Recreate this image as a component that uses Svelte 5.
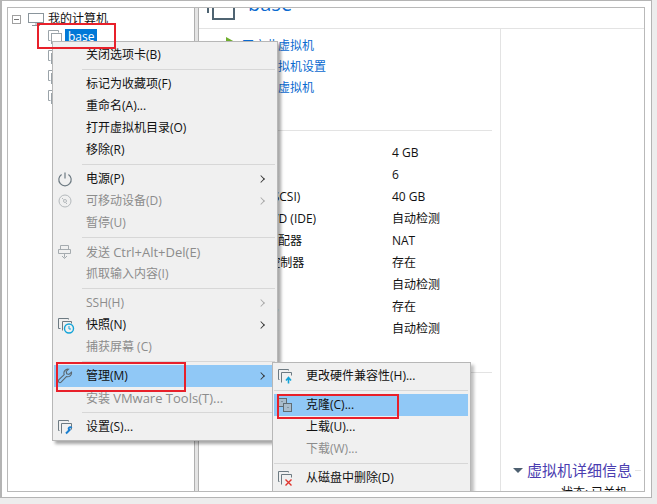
<script>
  const hw = [
    ['内存', '4 GB'], ['处理器', '6'], ['硬盘 (SCSI)', '40 GB'], ['CD/DVD (IDE)', '自动检测'],
    ['网络适配器', 'NAT'], ['USB 控制器', '存在'], ['声卡', '自动检测'], ['打印机', '存在'], ['显示器', '自动检测']
  ];
</script>

<svelte:head><title>VMware</title></svelte:head>

{#snippet vm()}
  <svg width="14" height="14" viewBox="0 0 14 14" fill="none" stroke="#9aa3a9">
    <path d="M2.5 10.5h-2v-10h10v2" />
    <rect x="3.5" y="3.5" width="10" height="10" fill="#fff" />
  </svg>
{/snippet}

<div class="page">
  <div class="frame">
    <div class="window">
      <aside class="tree">
        <div class="root">
          <span class="minus"></span>
          <svg width="16" height="13" viewBox="0 0 16 13" fill="none" stroke="#8a959c"><rect x=".5" y=".5" width="15" height="9" /><path d="M8 9.5v3M4 12.5h8" /></svg>
          <span>我的计算机</span>
        </div>
        <div class="vm">{@render vm()}<span class="sel">base</span></div>
        <div class="vm">{@render vm()}</div>
        <div class="vm">{@render vm()}</div>
        <div class="vm">{@render vm()}</div>
      </aside>
      <div class="split"></div>
      <main class="content">
        <header class="head">
          <svg width="28" height="28" viewBox="0 0 28 28" fill="none" stroke="#4f6472" stroke-width="2"><path d="M1 20v-19h17" /><rect x="6" y="5" width="21" height="21" /></svg>
          <span class="title">base</span>
        </header>
        <div class="body">
          <section class="left">
            <div class="links">
              <div class="link"><span class="play"></span>开启此虚拟机</div>
              <div class="link">编辑虚拟机设置</div>
              <div class="link">升级此虚拟机</div>
            </div>
            <div class="rule"></div>
            <div class="table">
              {#each hw as [k, v]}
                <div class="k">{k}</div><div class="v">{v}</div>
              {/each}
            </div>
            <div class="rule low"></div>
          </section>
          <section class="right">
            <div class="details"><span class="tri"></span><span class="dtitle">虚拟机详细信息</span><span class="dline"></span></div>
            <div class="state">状态: 已关机</div>
          </section>
        </div>
      </main>

      <div class="menu main-menu">
        <div class="item">关闭选项卡(B)</div>
        <div class="sep"></div>
        <div class="item">标记为收藏项(F)</div>
        <div class="item">重命名(A)...</div>
        <div class="item">打开虚拟机目录(O)</div>
        <div class="item">移除(R)</div>
        <div class="sep"></div>
        <div class="item has">
          <svg class="ic" width="16" height="16" viewBox="0 0 16 16" fill="none" stroke="#6d7a82" stroke-width="1.2"><path d="M4.6 3.4a6.2 6.2 0 1 0 6.8 0M8 1.5v6" /></svg>
          电源(P)<i class="arrow"></i>
        </div>
        <div class="item off has">
          <svg class="ic" width="16" height="16" viewBox="0 0 16 16" fill="none" stroke="#b4b9bc"><circle cx="8" cy="8" r="6" /><circle cx="8" cy="8" r="1.5" /><path d="M5 5l1.5 1.5M10 11l-1-1" /></svg>
          可移动设备(D)<i class="arrow"></i>
        </div>
        <div class="item off">暂停(U)</div>
        <div class="sep"></div>
        <div class="item off">
          <svg class="ic" width="16" height="16" viewBox="0 0 16 16" fill="none" stroke="#a5abaf"><path d="M3.5 1.5h8v4h-8zM1.5 5.5h12v4h-12zM7.5 9.5v4M5 12l2.5 2.5L10 12" /></svg>
          发送 <span class="lat">Ctrl+Alt+Del(E)</span>
        </div>
        <div class="item off">抓取输入内容(I)</div>
        <div class="sep"></div>
        <div class="item off has">SSH(H)<i class="arrow"></i></div>
        <div class="item has">
          <svg class="ic big" width="18" height="18" viewBox="0 0 18 18" fill="none" stroke="#6d7a82"><path d="M3.5 12.5h-2v-10h10v1" /><path d="M5.5 14.5v-9h9v2" /><circle cx="12" cy="12.5" r="4.5" stroke="#14a4d8" stroke-width="1.4" fill="#f0f0f0" /><path d="M12 10v3h2" stroke="#14a4d8" /></svg>
          快照(N)<i class="arrow"></i>
        </div>
        <div class="item off">捕获屏幕 (C)</div>
        <div class="sep"></div>
        <div class="item has hot">
          <svg class="ic" width="16" height="16" viewBox="0 0 16 16" fill="none" stroke="#5a666e" stroke-width="1.1"><path d="M14.5 4.2l-2.6 2.2-2.2-.7-.5-2.3 2.4-2.2a4 4 0 0 0-4.4 5.4L1.7 11.8a1.7 1.7 0 0 0 2.4 2.4l5.3-5.6a4 4 0 0 0 5.1-4.4z" /></svg>
          管理(M)<i class="arrow"></i>
        </div>
        <div class="item off">安装 <span class="lat">VMware Tools(T)...</span></div>
        <div class="sep"></div>
        <div class="item">
          <svg class="ic" width="16" height="16" viewBox="0 0 16 16" fill="none" stroke="#6d7a82"><path d="M2.5 11.5h-1v-10h10v1" /><path d="M4.5 14.5v-10h10v6" /><path d="M9 14.5l3.5-3.5a1.5 1.5 0 1 1 2-2" stroke="#1a7fd0" stroke-width="2" /></svg>
          设置(S)...
        </div>
      </div>

      <div class="menu sub-menu">
        <div class="item">
          <svg class="ic" width="16" height="16" viewBox="0 0 16 16" fill="none" stroke="#6d7a82"><path d="M2.5 11.5h-1v-10h10v1" /><path d="M4.5 14.5v-10h10v3" /><path d="M11.5 15.5v-5M9 12.5l2.5-3 2.5 3" stroke="#14a4d8" stroke-width="1.6" /></svg>
          更改硬件兼容性(H)...
        </div>
        <div class="sep"></div>
        <div class="item hot">
          <svg class="ic" width="16" height="16" viewBox="0 0 16 16" fill="none" stroke="#5f6c74"><rect x="1.5" y="1.5" width="8" height="8" fill="#a9bccb" /><rect x="6.5" y="6.5" width="8" height="8" fill="#a9bccb" /><path d="M4.5 4.5h1M10.5 10.5h1" /></svg>
          克隆(C)...
        </div>
        <div class="item">上载(U)...</div>
        <div class="item off">下载(W)...</div>
        <div class="sep"></div>
        <div class="item">
          <svg class="ic" width="16" height="16" viewBox="0 0 16 16" fill="none" stroke="#6d7a82"><path d="M2.5 11.5h-1v-10h10v1" /><path d="M4.5 14.5v-10h10v3" /><path d="M8.5 9.5l6 6M14.5 9.5l-6 6" stroke="#e0342c" stroke-width="1.4" /></svg>
          从磁盘中删除(D)
        </div>
      </div>

      <div class="mark m1"></div>
      <div class="mark m2"></div>
      <div class="mark m3"></div>
    </div>
  </div>
</div>

<style>
  :global(body) { margin: 0; background: #ededed; }
  .page { width: 657px; height: 504px; overflow: hidden; font: 12px/16px "Open Sans", "Noto Sans CJK SC", sans-serif; color: #111; box-sizing: border-box; }
  .frame { width: 652px; height: 498px; box-sizing: border-box; background: #fff; border: 1px solid #b4b4b4; border-left-width: 2px; padding: 6px 6px 5px 5px; }
  .window { position: relative; height: 100%; box-sizing: border-box; border: 1px solid #b9b9b9; display: flex; overflow: hidden; background: #fff; }

  .tree { width: 186px; padding-top: 3px; flex: none; }
  .root { display: flex; align-items: center; gap: 4px; height: 16px; padding-left: 4px; }
  .minus { width: 9px; height: 9px; box-sizing: border-box; border: 1px solid #a0a0a0; margin-right: 3px; background: linear-gradient(#777, #777) center / 5px 1px no-repeat; }
  .vm { height: 20px; padding-left: 40px; display: flex; align-items: center; gap: 3px; }
  .sel { background: #0078d7; color: #fff; padding: 0 3px; width: 26px; height: 16px; }

  .split { width: 5px; flex: none; background: #e4e4e4; border-left: 1px solid #b0b0b0; border-right: 1px solid #b0b0b0; box-sizing: border-box; }
  .content { flex: 1; min-width: 0; }
  .head { height: 20px; display: flex; border-bottom: 1px solid #e3e3e3; padding-left: 8px; gap: 13px; overflow: hidden; }
  .head svg { margin-top: -15px; flex: none; }
  .title { font-size: 20px; line-height: 28px; color: #0a6ad0; margin-top: -18px; }
  .body { display: flex; height: calc(100% - 21px); }
  .left { width: 302px; box-sizing: border-box; border-right: 1px solid #e3e3e3; padding: 6px 8px 0 0; flex: none; }
  .links { padding-left: 43px; height: 95px; }
  .link { height: 21px; line-height: 21px; color: #0a6ad0; position: relative; }
  .play { position: absolute; left: -16px; top: 2px; border-left: 9px solid #6fae2d; border-top: 5px solid transparent; border-bottom: 5px solid transparent; }
  .rule { height: 1px; background: #e3e3e3; margin-left: 16px; }
  .rule.low { margin: 32px 0 0 270px; }
  .table { display: grid; grid-template-columns: 150px 1fr; padding: 11px 0 0 43px; grid-auto-rows: 22px; line-height: 22px; }
  .right { flex: 1; padding: 431px 0 0 12px; overflow: hidden; }
  .details { display: flex; align-items: center; height: 20px; }
  .tri { border-top: 5px solid #4e6070; border-left: 5px solid transparent; border-right: 5px solid transparent; margin-right: 4px; }
  .dtitle { font-size: 15px; color: #4a3db0; white-space: nowrap; }
  .dline { height: 1px; width: 6px; background: #e3e3e3; margin-left: 3px; flex: none; }
  .state { margin: 5px 0 0 48px; white-space: nowrap; line-height: 16px; }

  .menu { position: absolute; background: #f0f0f0; border: 1px solid #b7b7b7; box-shadow: 3px 3px 3px rgba(0,0,0,.35); box-sizing: border-box; }
  .main-menu { left: 44px; top: 33px; width: 226px; padding: 2px 1px; }
  .sub-menu { left: 264px; top: 354px; width: 199px; padding: 2px 2px 2px 1px; box-shadow: 3px 3px 3px rgba(0,0,0,.25); }
  .item { height: 22px; line-height: 22px; padding-left: 32px; position: relative; white-space: nowrap; }
  .lat { font-size: 13px; }
  .hot { background: #90c8f6; }
  .off { color: #8c8c8c; }
  .ic { position: absolute; left: 3px; top: 3px; }
  .ic.big { top: 2px; }
  .sep { height: 1px; background: #d7d7d7; margin: 3px 1px 3px 28px; }
  .sub-menu .sep { margin-left: 0; margin-right: 0; }
  .arrow { position: absolute; right: 12px; top: 8px; width: 5px; height: 5px; border-top: 1px solid #333; border-right: 1px solid #333; transform: rotate(45deg) scale(.9); }
  .off .arrow { border-color: #a8a8a8; }

  .mark { position: absolute; border: 2px solid #e8202a; box-sizing: border-box; pointer-events: none; }
  .m1 { left: 29px; top: 15px; width: 79px; height: 26px; }
  .m2 { left: 48px; top: 354px; width: 130px; height: 30px; }
  .m3 { left: 269px; top: 386px; width: 122px; height: 25px; }
</style>
